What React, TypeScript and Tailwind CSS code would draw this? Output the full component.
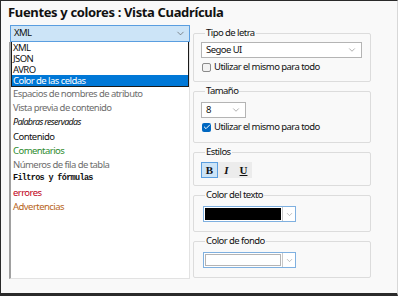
import { Check, ChevronDown } from "lucide-react";

const ui = "font-['Noto_Sans',sans-serif] text-[9.5px] tracking-[-0.55px]";

type Item = { label: string; className: string };

const listItems: Item[] = [
  { label: "Espacios de nombres de atributo", className: "text-[#6d6d6d]" },
  { label: "Vista previa de contenido", className: "text-[#6d6d6d]" },
  { label: "Palabras reservadas", className: "italic text-[9px] tracking-[-0.7px] text-[#111]" },
  { label: "Contenido", className: "text-[#111]" },
  { label: "Comentarios", className: "text-[#2e8b2e]" },
  { label: "Números de fila de tabla", className: "text-[#6d6d6d]" },
  {
    label: "Filtros y fórmulas",
    className: "font-['Liberation_Mono',monospace] font-bold text-[8.5px] tracking-[-0.67px] text-[#111]",
  },
  { label: "errores", className: "text-[#c00018]" },
  { label: "Advertencias", className: "text-[#b8651b]" },
];

export default function App() {
  return (
    <div
      className={`${ui} flex h-[296px] w-[398px] flex-col overflow-hidden border-t border-l border-r border-b-[3px] border-t-[#2a2a2a] border-l-[#2a2a2a] border-r-[#d8d8d8] border-b-[#2a2a2a] bg-[#f9f9f9] text-[#111]`}
    >
      <h1 className="h-[24px] pl-[7px] pt-[1px] text-[13px] font-bold leading-[20px] tracking-[-0.35px]">
        Fuentes y colores : Vista Cuadrícula
      </h1>

      <div className="flex gap-[3px] pl-[8px]">
        <div className="relative flex w-[181px] flex-col">
          <div className="ml-[1px] flex h-[17px] w-[180px] items-center justify-between border border-[#5a9ee0] bg-[#cce4f7] pl-[3px] pr-[3px]">
            <span>XML</span>
            <ChevronDown size={11} strokeWidth={1.4} className="text-[#555]" />
          </div>

          <div className="h-[237px] border-l-2 border-r border-b border-l-[#a0a0a0] border-r-[#e2e2e2] border-b-[#e2e2e2] bg-white pl-[2px] pt-[44.4px]">
            {listItems.map((item) => (
              <div key={item.label} className="flex h-[14.2px] items-center whitespace-nowrap">
                <span className={`leading-[11px] ${item.className}`}>{item.label}</span>
              </div>
            ))}
          </div>

          <div className="absolute left-[2px] top-[17px] w-[178px] border-x border-b border-[#1a1a1a] bg-white leading-[11px]">
            <div className="h-[11px] pl-[1px]">XML</div>
            <div className="h-[11px] pl-[1px]">JSON</div>
            <div className="h-[11px] pl-[1px]">AVRO</div>
            <div className="h-[11px] bg-[#0078d7] pl-[1px] text-white">Color de las celdas</div>
          </div>
        </div>

        <div className="flex w-[178px] flex-col gap-[3px] pt-[2px]">
          <Group title="Tipo de letra" height="h-[55px]">
            <div className="mt-[3px] flex h-[16px] w-[161px] items-center justify-between border border-[#b4b4b4] bg-white pl-[4px] pr-[4px]">
              <span>Segoe UI</span>
              <ChevronDown size={10} strokeWidth={1.4} className="text-[#777]" />
            </div>
            <CheckRow checked={false} />
          </Group>

          <Group title="Tamaño" height="h-[58px]">
            <div className="mt-[5px] flex h-[16px] w-[45px] items-center justify-between border border-[#b4b4b4] bg-white pl-[4px] pr-[4px]">
              <span>8</span>
              <ChevronDown size={10} strokeWidth={1.4} className="text-[#777]" />
            </div>
            <CheckRow checked />
          </Group>

          <Group title="Estilos" height="h-[40px]">
            <div className="mt-[4px] flex h-[16px] w-[51px] bg-[#ececec] font-['Liberation_Serif',serif] text-[11px] font-bold tracking-normal">
              <div className="flex w-[17px] items-center justify-center border border-[#5a9ee0] bg-[#cce4f7]">B</div>
              <div className="flex w-[17px] items-center justify-center italic">I</div>
              <div className="flex w-[17px] items-center justify-center underline">U</div>
            </div>
          </Group>

          <Group title="Color del texto" height="h-[43px]">
            <ColorCombo swatch="bg-black" />
          </Group>

          <Group title="Color de fondo" height="h-[43px]">
            <ColorCombo swatch="bg-white border border-[#b4b4b4]" />
          </Group>
        </div>
      </div>
    </div>
  );
}

function Group({ title, height, children }: { title: string; height: string; children: React.ReactNode }) {
  return (
    <fieldset className={`${height} rounded-[2px] border border-[#dcdcdc] pl-[7px]`}>
      <legend className="ml-[4px] px-[1px] leading-[12px]">{title}</legend>
      {children}
    </fieldset>
  );
}

function CheckRow({ checked }: { checked: boolean }) {
  return (
    <div className="mt-[4px] flex h-[10px] items-center gap-[3px] pl-[1px]">
      {checked ? (
        <span className="flex h-[9px] w-[9px] items-center justify-center rounded-[2px] bg-[#0067c0]">
          <Check size={8} strokeWidth={3} className="text-white" />
        </span>
      ) : (
        <span className="h-[9px] w-[9px] rounded-[2px] border border-[#8a8a8a] bg-[#f2f2f2]" />
      )}
      <span className="whitespace-nowrap">Utilizar el mismo para todo</span>
    </div>
  );
}

function ColorCombo({ swatch }: { swatch: string }) {
  return (
    <div className="ml-[2px] mt-[5px] flex h-[16px] w-[93px] border border-[#7fb0e0] bg-white">
      <div className="flex-1 p-[1px]">
        <div className={`h-full w-full ${swatch}`} />
      </div>
      <div className="flex w-[13px] items-center justify-center border-l border-[#c8c8c8]">
        <ChevronDown size={9} strokeWidth={1.4} className="text-[#888]" />
      </div>
    </div>
  );
}
